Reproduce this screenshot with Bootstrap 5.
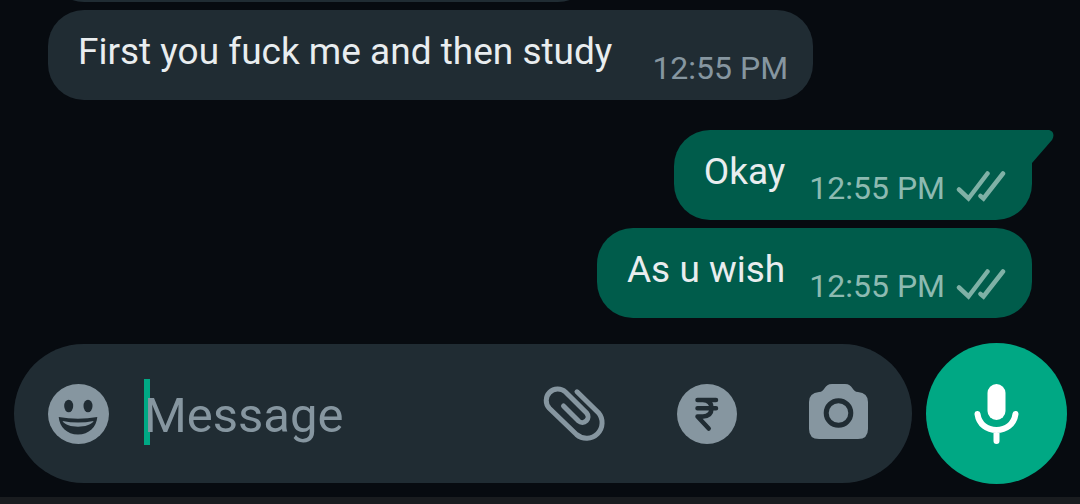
<!DOCTYPE html>
<html lang="en">
<head>
<meta charset="utf-8">
<meta name="viewport" content="width=device-width, initial-scale=1">
<title>Chat</title>
<link href="https://cdn.jsdelivr.net/npm/bootstrap@5.3.0/dist/css/bootstrap.min.css" rel="stylesheet">
<style>
  body { background: #070b10; font-family: Roboto, sans-serif; }
  svg { display: block; }
  .thread { gap: 8px; padding: 0 48px 25px; min-height: 0; }
  .bubble { min-height: 90px; padding: 20px 25px 12px 30px; border-radius: 36px; color: #e9edef; gap: 24px; }
  .bubble-in { background: #202c33; gap: 40px; }
  .bubble-out { background: #005c4b; }
  .bubble-earlier { width: 546px; }
  .bubble-first { margin-top: 22px; border-top-right-radius: 0; }
  .bubble-text { font-size: 37px; line-height: 44px; }
  .bubble-meta { font-size: 32px; line-height: 40px; color: #8696a0; gap: 10px; }
  .bubble-out .bubble-meta { color: #8dbab1; }
  .tail { top: 0; left: 100%; }
  .composer { gap: 14px; padding: 0 13px 13px 14px; }
  .pill { height: 139px; padding: 0 32px 0 26px; background: #202c33; color: #8696a0; }
  .pill .btn, .mic { color: inherit; }
  .field { margin-left: 24px; }
  .field input { font-size: 49px; line-height: 66px; color: #e9edef; caret-color: transparent; }
  .field input::placeholder { color: #8696a0; opacity: 1; }
  .cursor { width: 6px; height: 66px; background: #00a884; top: 0; left: 0; }
  .tools { gap: 53px; }
  .mic { width: 141px; height: 141px; background: #00a884; color: #fff; }
  .mic:hover { background: #029a7a; color: #fff; }
  .system-bar { height: 7px; background: #191c1f; }
</style>
</head>
<body class="vh-100 d-flex flex-column overflow-hidden">
  <main class="thread flex-grow-1 d-flex flex-column justify-content-end overflow-hidden">
    <div class="bubble bubble-in bubble-earlier flex-shrink-0"></div>
    <div class="bubble bubble-in d-flex align-self-start align-items-end flex-shrink-0">
      <span class="bubble-text align-self-start">First you fuck me and then study</span>
      <time class="bubble-meta text-nowrap">12:55 PM</time>
    </div>
    <div class="bubble bubble-out bubble-first position-relative d-flex align-self-end align-items-end flex-shrink-0">
      <svg class="tail position-absolute" width="22" height="34" viewBox="0 0 22 34" fill="#005c4b" aria-hidden="true"><path d="M0 0H16C21 0 23 5 20 10L0 33Z"/></svg>
      <span class="bubble-text align-self-start">Okay</span>
      <div class="bubble-meta d-flex align-items-center text-nowrap">
        <time>12:55 PM</time>
        <svg width="52" height="34" viewBox="5 11 52 34" fill="none" stroke="#7fb1a6" stroke-width="4.500" stroke-linecap="round" role="img" aria-label="Delivered"><path d="M9 29.500l9.500 9L37.500 13.500M30.500 36l3 2.500L53 13.500"/></svg>
      </div>
    </div>
    <div class="bubble bubble-out d-flex align-self-end align-items-end flex-shrink-0">
      <span class="bubble-text align-self-start">As u wish</span>
      <div class="bubble-meta d-flex align-items-center text-nowrap">
        <time>12:55 PM</time>
        <svg width="52" height="34" viewBox="5 11 52 34" fill="none" stroke="#7fb1a6" stroke-width="4.500" stroke-linecap="round" role="img" aria-label="Delivered"><path d="M9 29.500l9.500 9L37.500 13.500M30.500 36l3 2.500L53 13.500"/></svg>
      </div>
    </div>
  </main>

  <form class="composer d-flex align-items-center flex-shrink-0">
    <div class="pill rounded-pill flex-grow-1 d-flex align-items-center">
      <button type="button" class="btn border-0 p-0 flex-shrink-0" aria-label="Emoji">
        <svg width="80" height="80" viewBox="0 -1 80 80"><ellipse cx="38.500" cy="39" rx="30.500" ry="30" fill="currentColor"/><g fill="#202c33"><ellipse cx="28.700" cy="31" rx="4.500" ry="6.300"/><ellipse cx="48" cy="31" rx="4.500" ry="6.300"/><path d="M18.700 42Q38 45.500 57.300 42C56.500 52 49 59.500 38 59.500S19.500 52 18.700 42Z"/></g><path d="M22.500 46Q38 49 53.700 46C51 50 45 51.700 38 51.700S25 50 22.500 46Z" fill="currentColor"/></svg>
      </button>
      <div class="field position-relative flex-grow-1">
        <span class="cursor position-absolute"></span>
        <input type="text" class="position-relative d-block w-100 border-0 p-0 pt-1 bg-transparent shadow-none" placeholder="Message" aria-label="Message">
      </div>
      <div class="tools d-flex flex-shrink-0">
        <button type="button" class="btn border-0 p-0" aria-label="Attach">
          <svg width="80" height="80" viewBox="-1 -1 80 80" fill="none" stroke="currentColor" stroke-width="5" stroke-linecap="round"><path d="M28.500 31L43.500 46A5.700 5.700 0 0 0 51.600 38L30.500 17A11.500 11.500 0 0 0 14.300 33.300L41.500 59.500A15.500 15.500 0 0 0 63.400 37.700L42 16.800"/></svg>
        </button>
        <button type="button" class="btn border-0 p-0" aria-label="Payment">
          <svg width="80" height="80" viewBox="-3 -1 80 80"><circle cx="37" cy="39" r="30" fill="currentColor"/><path d="M27.500 25H46M27.500 33.300H46M29 25H33Q41.500 25.500 41.500 33.300T33 41.500H27.500L38.700 53.500" fill="none" stroke="#202c33" stroke-width="4.500" stroke-linecap="round" stroke-linejoin="round"/></svg>
        </button>
        <button type="button" class="btn border-0 p-0" aria-label="Camera">
          <svg width="80" height="80" viewBox="0 -1 80 80"><path d="M19 17C25 17 24 9 32 9H45C53 9 52 17 58 17Q68 18 68 27V54Q68 64 58 64H19Q9 64 9 54V27Q9 18 19 17Z" fill="currentColor"/><circle cx="38.500" cy="38" r="12.300" fill="none" stroke="#202c33" stroke-width="5"/></svg>
        </button>
      </div>
    </div>
    <button type="button" class="mic btn border-0 p-0 rounded-circle d-flex align-items-center justify-content-center flex-shrink-0" aria-label="Record voice message">
      <svg width="81" height="81" viewBox="0 0 81 81"><rect x="31.500" y="11" width="18" height="36" rx="9" fill="currentColor"/><path d="M21.500 41C23 51.500 31 57 40.500 57S58 51.500 59.500 41M40.500 57V68" fill="none" stroke="currentColor" stroke-width="6" stroke-linecap="round"/></svg>
    </button>
  </form>
  <div class="system-bar flex-shrink-0"></div>
<script src="https://cdn.jsdelivr.net/npm/bootstrap@5.3.0/dist/js/bootstrap.bundle.min.js"></script>
</body>
</html>
